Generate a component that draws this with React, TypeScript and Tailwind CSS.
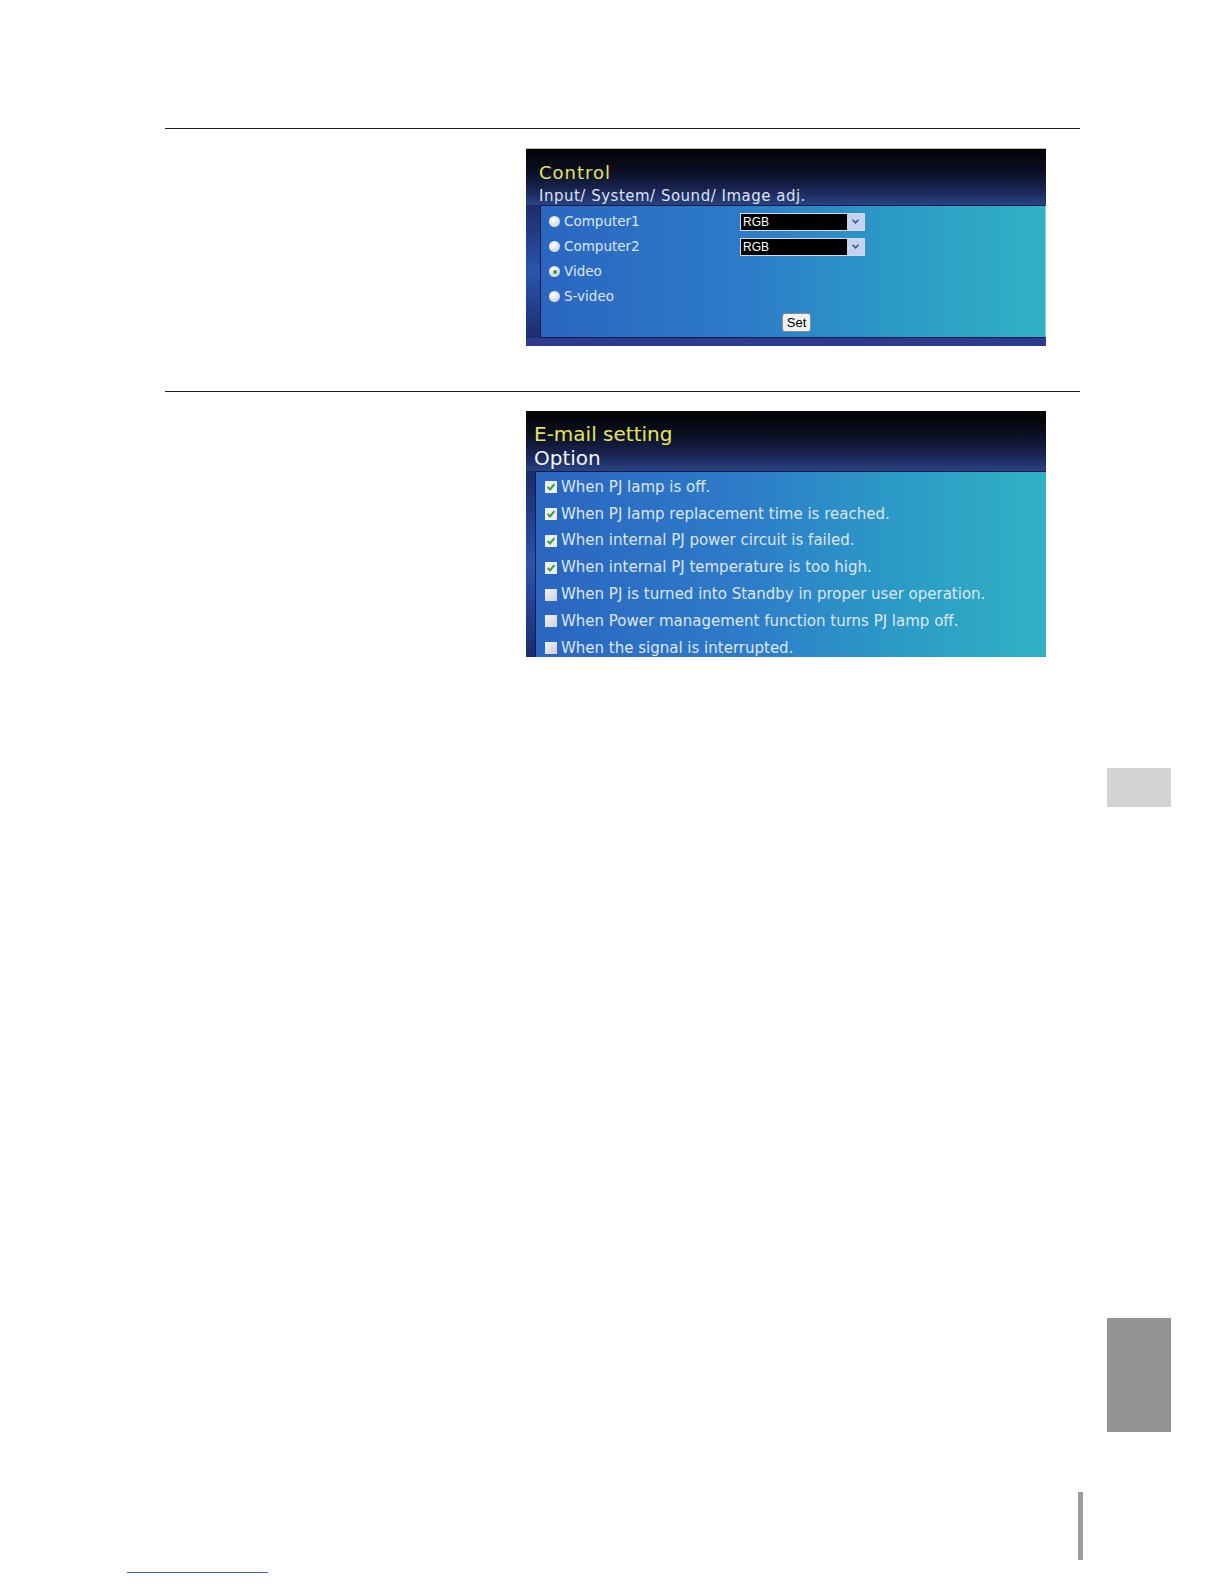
import React from "react";

type Row = { label: string; on: boolean; select?: boolean };

const inputs: Row[] = [
  { label: "Computer1", on: false, select: true },
  { label: "Computer2", on: false, select: true },
  { label: "Video", on: true },
  { label: "S-video", on: false },
];

const options: Row[] = [
  { label: "When PJ lamp is off.", on: true },
  { label: "When PJ lamp replacement time is reached.", on: true },
  { label: "When internal PJ power circuit is failed.", on: true },
  { label: "When internal PJ temperature is too high.", on: true },
  { label: "When PJ is turned into Standby in proper user operation.", on: false },
  { label: "When Power management function turns PJ lamp off.", on: false },
  { label: "When the signal is interrupted.", on: false },
];

const Radio = ({ on }: { on: boolean }) => (
  <span className="flex h-[11px] w-[11px] shrink-0 items-center justify-center rounded-full bg-[radial-gradient(circle_at_40%_35%,#ffffff,#d6d9de_65%,#a9aeb7)]">
    {on && <span className="h-[4px] w-[4px] rounded-full bg-[#3b9a3b]" />}
  </span>
);

const Check = ({ on }: { on: boolean }) => (
  <span
    className={
      on
        ? "flex h-[12px] w-[12px] shrink-0 items-center justify-center bg-[#eceef1]"
        : "flex h-[12px] w-[12px] shrink-0 bg-[linear-gradient(135deg,#f0f1f3,#cdd0d6)]"
    }
  >
    {on && (
      <svg width="10" height="10" viewBox="0 0 10 10">
        <path d="M1.6 5 L4 7.4 L8.4 2.2" fill="none" stroke="#35a035" strokeWidth="2" />
      </svg>
    )}
  </span>
);

const Select = () => (
  <div className="flex h-[18px] w-[125px] border border-[#d3d9e8]">
    <div className="flex-1 bg-black pl-[2px] font-['Liberation_Sans',sans-serif] text-[12px] leading-[16px] text-white">
      RGB
    </div>
    <div className="flex w-[17px] items-center justify-center bg-[#c7d3ee]">
      <svg width="9" height="7" viewBox="0 0 9 7">
        <path d="M1.5 1.8 L4.5 4.8 L7.5 1.8" fill="none" stroke="#3f5596" strokeWidth="1.6" />
      </svg>
    </div>
  </div>
);

const header =
  "bg-[linear-gradient(to_bottom,#040406_0%,#0a0d1c_35%,#1a2656_75%,#2a4382_100%)]";
const panel =
  "bg-[linear-gradient(to_right,#2a66c0_0%,#2d7bc8_40%,#2b9cc6_72%,#30b1c3_100%)]";
const strip = "bg-[linear-gradient(to_bottom,#1b2b68,#2a55ad_50%,#1b2d6c)]";

const ControlShot = () => (
  <div className="flex w-[520px] flex-col border-t border-[#b9b9b9] bg-[#1c2d6c] font-['DejaVu_Sans',sans-serif]">
    <div className={`h-[56px] pl-[13px] pt-[13px] ${header}`}>
      <div className="text-[18px] leading-[22px] tracking-[1px] text-[#e6e55e]">Control</div>
      <div className="mt-[3px] text-[15px] leading-[18px] tracking-[0.5px] text-[#dce3f0]">
        Input/ System/ Sound/ Image adj.
      </div>
    </div>
    <div className="flex h-[133px]">
      <div className={`w-[14px] ${strip}`} />
      <div className={`flex-1 border border-r-[#7fd4dc] border-[#0d1b46] pl-[8px] pt-[3px] ${panel}`}>
        {inputs.map((r) => (
          <div key={r.label} className="flex h-[25px] items-center">
            <div className="flex w-[191px] items-center gap-[4px]">
              <Radio on={r.on} />
              <span className="text-[13.5px] leading-none text-[#dfe6f3]">{r.label}</span>
            </div>
            {r.select && <Select />}
          </div>
        ))}
        <button className="ml-[233px] mt-[4px] flex h-[19px] w-[29px] items-center justify-center rounded-[3px] border border-[#8b8b8b] bg-[#f1f1f1] font-['Liberation_Sans',sans-serif] text-[13px] leading-none text-black">
          Set
        </button>
      </div>
    </div>
    <div className="h-[8px] bg-[#2e3a8e]" />
  </div>
);

const MailShot = () => (
  <div className="flex w-[520px] flex-col bg-[#1c2d6c] font-['DejaVu_Sans',sans-serif]">
    <div className={`h-[60px] pl-[8px] pt-[11px] ${header}`}>
      <div className="text-[20px] leading-[24px] text-[#e6e55e]">E-mail setting</div>
      <div className="text-[20px] leading-[24px] text-[#f2f5fa]">Option</div>
    </div>
    <div className="flex h-[186px]">
      <div className={`w-[9px] ${strip}`} />
      <div className={`flex-1 border-l border-t border-[#0d1b46] pl-[9px] pt-[2px] ${panel}`}>
        {options.map((r) => (
          <div key={r.label} className="flex h-[26.8px] items-center gap-[4px]">
            <Check on={r.on} />
            <span className="text-[15px] leading-none text-[#dfe6f3]">{r.label}</span>
          </div>
        ))}
      </div>
    </div>
  </div>
);

export default function App() {
  return (
    <div className="flex h-[1584px] w-[1224px] bg-white">
      <div className="ml-[165px] flex w-[915px] flex-col pt-[128px]">
        <div className="h-px bg-[#231f20]" />
        <div className="ml-[361px] mt-[19px]">
          <ControlShot />
        </div>
        <div className="mt-[45px] h-px bg-[#231f20]" />
        <div className="ml-[361px] mt-[19px]">
          <MailShot />
        </div>
        <div className="ml-[913px] mt-[835px] h-[68px] w-[5px] bg-[#9c9c9c]" />
        <div className="ml-[-38px] mt-[12px] h-px w-[141px] bg-[#3f5fcf]" />
      </div>
      <div className="ml-[27px] flex w-[64px] flex-col pt-[768px]">
        <div className="h-[39px] bg-[#d3d3d3]" />
        <div className="mt-[511px] h-[114px] bg-[#939496]" />
      </div>
    </div>
  );
}
